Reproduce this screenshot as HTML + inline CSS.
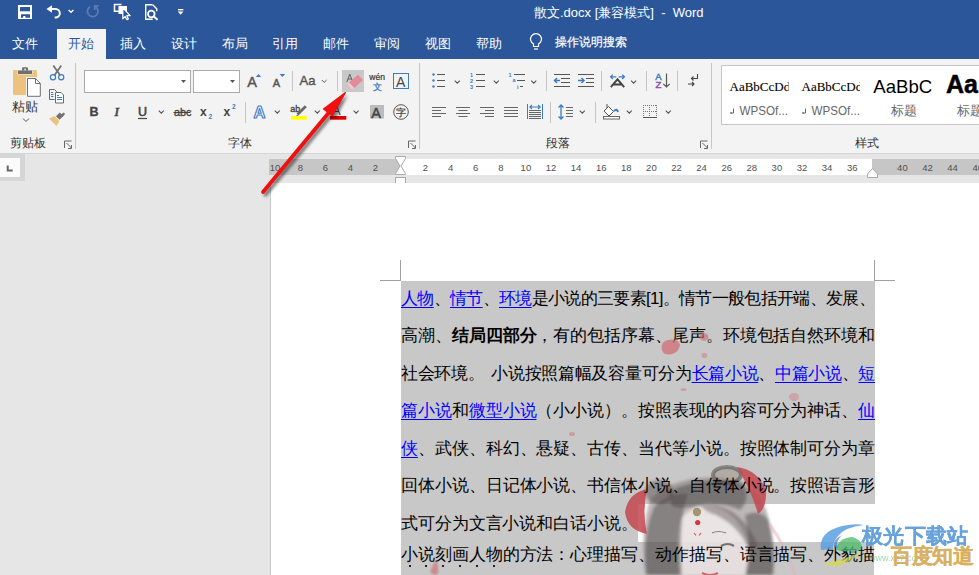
<!DOCTYPE html>
<html><head><meta charset="utf-8">
<style>
*{margin:0;padding:0;box-sizing:border-box}
html,body{width:979px;height:575px;overflow:hidden;background:#e6e6e6;font-family:"Liberation Sans",sans-serif;position:relative}
.a{position:absolute}
#title{left:0;top:0;width:979px;height:59px;background:#2b579a}
.tab{position:absolute;top:34.8px;color:#fff;font-size:12.8px;line-height:17px;white-space:nowrap}
#ribbon{left:0;top:59px;width:979px;height:95px;background:#f3f3f3;border-bottom:1px solid #d6d6d6}
.vsep{position:absolute;width:1px;background:#c8c8c8}
.glabel{position:absolute;top:134.5px;font-size:12px;line-height:16px;color:#333;white-space:nowrap}
.chev{position:absolute;width:5px;height:5px;border-right:1px solid #666;border-bottom:1px solid #666;transform:rotate(45deg)}
.rnum{position:absolute;top:162px;font-size:9.5px;line-height:12px;color:#505050;width:20px;margin-left:-10px;text-align:center}
#page{left:270px;top:183px;width:709px;height:392px;background:#fff;border-left:1px solid #c9c9c9}
b{font-weight:700}
.ln{position:absolute;left:401px;width:474px;height:20px;font-size:17px;line-height:20px;letter-spacing:-0.1px;color:#000;text-align:justify;text-align-last:justify;white-space:normal;font-weight:300}
.lk{color:#0000ff;text-decoration:underline;text-underline-offset:3px;text-decoration-thickness:1px}
</style></head><body>
<div id="title" class="a"></div>
<div class="a" style="left:534px;top:5px;font-size:13px;line-height:16px;color:#fff;white-space:nowrap">散文.docx [兼容模式]&nbsp; - &nbsp;Word</div>

<div class="a" style="left:57px;top:29px;width:49px;height:30px;background:#f3f3f3"></div>
<div class="tab" style="left:12px">文件</div>
<div class="tab" style="left:68px;color:#2b579a">开始</div>
<div class="tab" style="left:120px">插入</div>
<div class="tab" style="left:171px">设计</div>
<div class="tab" style="left:222px">布局</div>
<div class="tab" style="left:272px">引用</div>
<div class="tab" style="left:323px">邮件</div>
<div class="tab" style="left:374px">审阅</div>
<div class="tab" style="left:425px">视图</div>
<div class="tab" style="left:476px">帮助</div>
<div class="tab" style="left:555px;top:33.8px;font-size:12.3px;-webkit-text-stroke:0.2px #fff">操作说明搜索</div>

<div id="ribbon" class="a"></div>
<svg class="a" style="left:0;top:0" width="979" height="153" viewBox="0 0 979 153" font-family="Liberation Sans, sans-serif">
<!-- quick access -->
<rect x="18" y="5" width="14" height="14" fill="#fff"/>
<rect x="20" y="7" width="10" height="4.3" fill="#2b579a"/>
<path d="M21 14.2h9v3.6h-4.6v-1.8h-2.2v1.8h-2.2z" fill="#2b579a"/>
<path d="M46.5 9l5.5-3.8v7.6z" fill="#fff"/>
<path d="M50 9h5.5a4.3 4.3 0 0 1 0 8.6h-0.8" fill="none" stroke="#fff" stroke-width="2"/>
<path d="M68.6 10l2.4 2.2 2.4-2.2" fill="none" stroke="#fff" stroke-width="1.5"/>
<g fill="none" stroke="#5b7bb5" stroke-width="1.8">
  <path d="M95.5 6.8a5.3 5.3 0 1 1 -5.5 0"/>
  <path d="M94.8 10v-4.2h4"/>
</g>
<path d="M121.5 4.6h-7v6.7h4.5" fill="none" stroke="#fff" stroke-width="1.5"/>
<rect x="118.5" y="6" width="8.5" height="8" fill="#fff"/>
<path d="M122.8 7.8v11l2.4-2.4 1.6 3.3 1.6-0.8-1.6-3.2h3.3z" fill="#2b579a" stroke="#fff" stroke-width="1.2" stroke-linejoin="round"/>
<g fill="none" stroke="#fff" stroke-width="1.4">
  <path d="M152.5 4.7h-6.8v14.6h7"/>
  <path d="M152.7 4.7l4 4v2.5"/>
  <circle cx="151.3" cy="14" r="3.3" stroke-width="1.8"/>
  <path d="M153.8 16.5l3.8 3.3" stroke-width="2"/>
</g>
<path d="M178 9.7h5.3" stroke="#fff" stroke-width="1.4"/>
<path d="M177.8 11.4h5.6l-2.8 3.3z" fill="#fff"/>

<!-- lightbulb -->
<g fill="none" stroke="#fff" stroke-width="1.2">
  <path d="M533.5 46.5v-2.5a5.5 5.5 0 1 1 5 0v2.5z"/>
  <path d="M534 49h4"/>
</g>

<!-- ribbon separators -->
<g stroke="#c6c6c6" stroke-width="1">
  <path d="M75.5 63v86"/><path d="M419.5 63v86"/><path d="M711.5 63v86"/>
  <path d="M292.5 71v20"/><path d="M337.5 71v20"/><path d="M245.5 102v21"/>
  <path d="M546.5 71v20"/><path d="M601.5 71v20"/><path d="M646.5 71v20"/><path d="M677.5 71v20"/>
  <path d="M550.5 102v21"/><path d="M595.5 102v21"/>
</g>
<!-- dialog launchers -->
<g fill="none" stroke="#666" stroke-width="1">
  <path d="M64.5 148v-7h7"/><path d="M66.5 143l5 5"/><path d="M68 148.5h3.5v-3.5"/>
  <path d="M408.5 148v-7h7"/><path d="M410.5 143l5 5"/><path d="M412 148.5h3.5v-3.5"/>
  <path d="M700.5 148v-7h7"/><path d="M702.5 143l5 5"/><path d="M704 148.5h3.5v-3.5"/>
</g>

<!-- clipboard -->
<rect x="13" y="70" width="24" height="25" rx="1.2" fill="#ebc27e"/>
<path d="M17.5 69.5h15v5h-15z" fill="#f3f3f3"/>
<path d="M18 70.4h14v3.6h-14z" fill="#707070"/>
<path d="M22 70.5v-2a1.2 1.2 0 0 1 1.2-1.2h3.6a1.2 1.2 0 0 1 1.2 1.2v2z" fill="#707070"/>
<rect x="24.3" y="68.6" width="1.6" height="1.6" fill="#f3f3f3"/>
<path d="M26 77h10l5.8 5.8v15h-15.8z" fill="#f3f3f3"/>
<path d="M27.5 78.5h8l4.8 4.8v13h-12.8z" fill="#fff" stroke="#707070" stroke-width="1"/>
<path d="M35.5 78.5v5h4.8" fill="none" stroke="#707070" stroke-width="1"/>
<path d="M23 118.5l3 3 3-3" fill="none" stroke="#555" stroke-width="1"/>
<!-- scissors -->
<path d="M53.3 65.5l7 10M61.3 65.5l-7 10" stroke="#707070" stroke-width="1.7" fill="none"/>
<circle cx="53" cy="77.3" r="2.6" fill="none" stroke="#3e7cc1" stroke-width="1.2"/>
<circle cx="61.2" cy="77.3" r="2.6" fill="none" stroke="#3e7cc1" stroke-width="1.2"/>
<!-- copy -->
<path d="M49.5 89.5h5l2 2v1" fill="none" stroke="#6a6a6a" stroke-width="1"/>
<path d="M49.5 89.5v10h5" fill="none" stroke="#6a6a6a" stroke-width="1"/>
<path d="M55.5 92.5h5.5l2.5 2.5v8h-8z" fill="#fff" stroke="#6a6a6a" stroke-width="1"/>
<g stroke="#3e7cc1" stroke-width="1"><path d="M51 92.5h2M51 94.5h2.5M51 96.5h2.5M57 95.5h2M57 97.5h5M57 99.5h5"/></g>
<!-- format painter -->
<path d="M63.5 112.5l1.6 1.6-2.8 2.8-1.6-1.6z" fill="#707070"/>
<path d="M55.5 115.8l3.8-3.8 3.5 3.5-3.8 3.8z" fill="#707070" transform="translate(0.5,0.5)"/>
<path d="M49 118.5l5.5-2.5 5 5-3 5z" fill="#ebc27e"/>

<!-- font name/size boxes -->
<rect x="84.5" y="70.5" width="106" height="22" fill="#fff" stroke="#ababab"/>
<rect x="193.5" y="70.5" width="46" height="22" fill="#fff" stroke="#ababab"/>
<path d="M181 80h5l-2.5 3z" fill="#555"/><path d="M230 80h5l-2.5 3z" fill="#555"/>
<!-- grow/shrink -->
<text x="247.3" y="86.8" font-size="14.5" fill="#555" stroke="#555" stroke-width="0.45">A</text>
<path d="M255.8 77h5.4l-2.7-3z" fill="#3e7cc1"/>
<text x="272.7" y="86.8" font-size="11" fill="#555" stroke="#555" stroke-width="0.45">A</text>
<path d="M279.6 74h5.6l-2.8 3z" fill="#3e7cc1"/>
<text x="299.6" y="85.3" font-size="13" fill="#555" stroke="#555" stroke-width="0.4">Aa</text>
<path d="M321.8 80l2.4 2.4 2.4-2.4" fill="none" stroke="#555" stroke-width="1"/>
<!-- eraser -->
<rect x="342" y="70" width="22" height="22" fill="#c8c8c8"/>
<path d="M346.8 82l3-7.8 3 7.8M348 79h3.5" fill="none" stroke="#555" stroke-width="0.9"/>
<g transform="rotate(-42 355 82.3)"><rect x="347.5" y="78.6" width="15" height="7.4" rx="0.8" fill="#e48b9b"/><rect x="347.5" y="78.6" width="3" height="7.4" fill="#f5c9d0"/></g>
<!-- wen -->
<text x="369.3" y="80" font-size="8.5" fill="#333" stroke="#333" stroke-width="0.2">wén</text>
<text x="373" y="89.5" font-size="9" fill="#3e7cc1" stroke="#3e7cc1" stroke-width="0.3">文</text>
<!-- boxed A -->
<rect x="393.5" y="73.5" width="15" height="15" fill="none" stroke="#3e7cc1" stroke-width="1"/>
<text x="396" y="86.5" font-size="14" fill="#444">A</text>

<!-- row 2 font -->
<text x="89.5" y="116" font-size="12.5" font-weight="bold" fill="#444" stroke="#444" stroke-width="0.3">B</text>
<text x="114.5" y="116" font-size="13" font-style="italic" font-family="Liberation Serif, serif" fill="#444" stroke="#444" stroke-width="0.7">I</text>
<text x="138" y="116" font-size="12.5" fill="#444" stroke="#444" stroke-width="0.6">U</text>
<path d="M138 118.5h9" stroke="#444" stroke-width="1.2"/>
<path d="M158.8 110.6l2.5 2.5 2.5-2.5" fill="none" stroke="#555" stroke-width="1.1"/>
<text x="174" y="116" font-size="10.8" fill="#444" stroke="#444" stroke-width="0.35">abc</text>
<path d="M173.5 112.5h17" stroke="#444" stroke-width="1"/>
<text x="200" y="116" font-size="12" font-weight="bold" fill="#444">x</text>
<text x="208.5" y="119" font-size="6.5" fill="#3e7cc1" font-weight="bold">2</text>
<text x="223.5" y="116" font-size="12" font-weight="bold" fill="#444">x</text>
<text x="232" y="108.5" font-size="6.5" fill="#3e7cc1" font-weight="bold">2</text>
<!-- text effects -->
<text x="253.5" y="118" font-size="16.5" font-weight="bold" fill="#fff" stroke="#3e7cc1" stroke-width="1.1" stroke-linejoin="round">A</text>
<path d="M274.8 110.6l2.5 2.5 2.5-2.5" fill="none" stroke="#555" stroke-width="1.1"/>
<!-- highlight -->
<text x="290.3" y="112" font-size="9" fill="#444" stroke="#444" stroke-width="0.35">ab</text>
<path d="M297.5 114.5l8.3-8.3" stroke="#6a6a6a" stroke-width="2.8"/><path d="M296 116l1.5-1.5 1 1z" fill="#555"/>
<rect x="291" y="116" width="15.7" height="3.7" fill="#ffff00"/>
<path d="M314.8 110.6l2.5 2.5 2.5-2.5" fill="none" stroke="#555" stroke-width="1.1"/>
<!-- font color -->
<text x="332" y="115" font-size="13" fill="#444">A</text>
<rect x="330" y="116" width="16.3" height="3.7" fill="#e00000"/>
<path d="M353.6 110.6l2.5 2.5 2.5-2.5" fill="none" stroke="#555" stroke-width="1.1"/>
<!-- shaded A -->
<rect x="370" y="105" width="14" height="13.5" fill="#bcbcbc"/>
<text x="371.3" y="117.5" font-size="14.5" fill="#444" stroke="#444" stroke-width="0.5">A</text>
<!-- circled zi -->
<circle cx="401" cy="112" r="7.3" fill="none" stroke="#555" stroke-width="1"/>
<text x="396" y="116.2" font-size="10" fill="#444" stroke="#444" stroke-width="0.25">字</text>

<!-- paragraph row 1 -->
<g fill="#3e7cc1"><circle cx="433.5" cy="74.5" r="1.2"/><circle cx="433.5" cy="80.5" r="1.2"/><circle cx="433.5" cy="86.5" r="1.2"/></g>
<g stroke="#555" stroke-width="1"><path d="M437 74.5h8M437 80.5h8M437 86.5h8"/></g>
<path d="M454.8 80.6l2.5 2.5 2.5-2.5" fill="none" stroke="#555" stroke-width="1.1"/>
<g font-size="5.5" fill="#3e7cc1" font-weight="bold"><text x="470" y="76.5">1</text><text x="470" y="82.5">2</text><text x="470" y="88.5">3</text></g>
<g stroke="#555" stroke-width="1"><path d="M476 74.5h9M476 80.5h9M476 86.5h9"/></g>
<path d="M493.8 80.6l2.5 2.5 2.5-2.5" fill="none" stroke="#555" stroke-width="1.1"/>
<g font-size="5.5" fill="#3e7cc1" font-weight="bold"><text x="508.5" y="76.5">1</text><text x="512.5" y="82">a</text><text x="517" y="88.5">i</text></g>
<g stroke="#555" stroke-width="1"><path d="M514 74.5h11M517 80.5h8M520 86.5h3"/></g>
<path d="M531.3 80.6l2.5 2.5 2.5-2.5" fill="none" stroke="#555" stroke-width="1.1"/>
<!-- indent -->
<g stroke="#555" stroke-width="1"><path d="M554 74.5h16M561 78.5h9M561 82.5h9M554 86.5h16"/><path d="M578 74.5h16M586 78.5h8M586 82.5h8M578 86.5h16"/></g>
<path d="M554 80.5h6M557 78l-2.5 2.5 2.5 2.5" fill="none" stroke="#3e7cc1" stroke-width="1.5"/>
<path d="M578 80.5h6M581.5 78l2.5 2.5-2.5 2.5" fill="none" stroke="#3e7cc1" stroke-width="1.5"/>
<!-- char spacing -->
<path d="M610.8 87.2L617.5 79.3L624.2 87.2M613.2 84.5h8.6" fill="none" stroke="#444" stroke-width="1.9"/>
<path d="M616.3 76.8h-5.5M612.8 74.6l-2.2 2.2 2.2 2.2M618.7 76.8h5.5M622.2 74.6l2.2 2.2-2.2 2.2" fill="none" stroke="#3e7cc1" stroke-width="1.3"/>
<path d="M631.1 80.6l2.5 2.5 2.5-2.5" fill="none" stroke="#555" stroke-width="1.1"/>
<!-- sort -->
<text x="655.3" y="80.2" font-size="9.5" fill="#3e7cc1" stroke="#3e7cc1" stroke-width="0.45">A</text>
<text x="655.6" y="88" font-size="9.5" fill="#8f50b5" stroke="#8f50b5" stroke-width="0.45">Z</text>
<path d="M666.5 73.5v13.5M663.3 83.8l3.2 3.2 3.2-3.2" fill="none" stroke="#555" stroke-width="1.2"/>
<!-- show marks -->
<path d="M697.5 74v4.5h-6M693.5 76.5l-2 2 2 2" fill="none" stroke="#444" stroke-width="1.1"/>
<path d="M688 84h6M692 82l2 2-2 2" fill="none" stroke="#444" stroke-width="1.1"/>

<!-- paragraph row 2 -->
<g stroke="#666" stroke-width="1">
<path d="M432 107.5h14M432 110.5h9M432 113.5h14M432 116.5h9"/>
<path d="M456 107.5h14M458.5 110.5h9M456 113.5h14M458.5 116.5h9"/>
<path d="M480 107.5h14M485 110.5h9M480 113.5h14M485 116.5h9"/>
<path d="M504 107.5h14M504 110.5h14M504 113.5h14M504 116.5h14"/>
<path d="M529 110.5h12M529 112.5h12M529 114.5h12M529 116.5h12M529 118.5h12"/>
</g>
<path d="M527.5 104v15M542.5 104v15" stroke="#3e7cc1" stroke-width="1"/>
<path d="M529.5 107h11M532 105l-2.2 2 2.2 2M538 105l2.2 2-2.2 2" fill="none" stroke="#3e7cc1" stroke-width="1.1"/>
<!-- line spacing -->
<path d="M561 105v14M558.5 107.5l2.5-2.5 2.5 2.5M558.5 116.5l2.5 2.5 2.5-2.5" fill="none" stroke="#3e7cc1" stroke-width="1.3"/>
<g stroke="#666" stroke-width="1"><path d="M566 107.5h7M566 110.5h7M566 113.5h7M566 116.5h7"/></g>
<path d="M579.8 110.6l2.5 2.5 2.5-2.5" fill="none" stroke="#555" stroke-width="1.1"/>
<!-- shading -->
<path d="M604 111l4.5-4.5 5 5-4.5 4.5z" fill="#fff" stroke="#555" stroke-width="1"/>
<path d="M607 108v-4" stroke="#555" stroke-width="1"/>
<path d="M614 111q3-3 4 1" fill="none" stroke="#3e7cc1" stroke-width="2"/>
<rect x="603.5" y="116.5" width="16" height="2.5" fill="#fff" stroke="#666" stroke-width="1"/>
<path d="M626.8 110.6l2.5 2.5 2.5-2.5" fill="none" stroke="#555" stroke-width="1.1"/>
<!-- borders -->
<g stroke="#777" stroke-width="1" stroke-dasharray="1 1" fill="none"><path d="M643.5 105v12M656.5 105v12M643 105.5h14M643 111.5h14M649.5 105v12"/></g>
<path d="M643 117.5h14" stroke="#555" stroke-width="1"/>
<path d="M665.8 110.6l2.5 2.5 2.5-2.5" fill="none" stroke="#555" stroke-width="1.1"/>

<!-- styles gallery -->
<rect x="721.5" y="65.5" width="270" height="59" fill="#fff" stroke="#c6c6c6"/>
<clipPath id="c1"><rect x="728" y="70" width="60.5" height="30"/></clipPath>
<clipPath id="c2"><rect x="800" y="70" width="60" height="30"/></clipPath>
<text x="729.5" y="91" font-size="13" font-family="Liberation Serif, serif" fill="#000" stroke="#000" stroke-width="0.1" clip-path="url(#c1)">AaBbCcDd</text>
<text x="801.5" y="91" font-size="13" font-family="Liberation Serif, serif" fill="#000" stroke="#000" stroke-width="0.1" clip-path="url(#c2)">AaBbCcDd</text>
<text x="873.3" y="92.6" font-size="18.6" fill="#000">AaBbC</text>
<text x="946" y="93" font-size="25" font-weight="bold" fill="#000" stroke="#000" stroke-width="0.5">Aa</text>
<g fill="#666" font-size="12.2"><text x="739.5" y="115" textLength="48.5" lengthAdjust="spacingAndGlyphs">WPSOf...</text><text x="811.5" y="115" textLength="48.5" lengthAdjust="spacingAndGlyphs">WPSOf...</text></g>
<g fill="none" stroke="#666" stroke-width="1"><path d="M733.5 108.5v4.5h-3M731.5 112l-1 1 1 1"/><path d="M805.5 108.5v4.5h-3M803.5 112l-1 1 1 1"/></g>
<g fill="#666" font-size="12.5"><text x="890.5" y="115">标题</text><text x="957" y="115">标题</text></g>
</svg>

<div class="a" style="left:12px;top:99px;font-size:12.5px;line-height:16px;color:#333">粘贴</div>
<div class="glabel" style="left:10px">剪贴板</div>
<div class="glabel" style="left:228.3px">字体</div>
<div class="glabel" style="left:546px">段落</div>
<div class="glabel" style="left:855px">样式</div>

<!-- ruler -->
<div class="a" style="left:0;top:154px;width:25px;height:27px;background:#d6d6d6"></div>
<div class="a" style="left:0;top:158px;width:20px;height:19px;background:#fbfbfb"></div>
<div class="a" style="left:269px;top:159px;width:710px;height:16px;background:#c6c6c6"></div>
<div class="a" style="left:400px;top:159px;width:472px;height:16px;background:#fff"></div>

<div class="rnum" style="left:275.0px">10</div><div class="rnum" style="left:300.4px">8</div><div class="rnum" style="left:325.3px">6</div><div class="rnum" style="left:350.5px">4</div><div class="rnum" style="left:375.3px">2</div><div class="rnum" style="left:425.5px">2</div><div class="rnum" style="left:450.6px">4</div><div class="rnum" style="left:475.7px">6</div><div class="rnum" style="left:500.8px">8</div><div class="rnum" style="left:525.9px">10</div><div class="rnum" style="left:551.0px">12</div><div class="rnum" style="left:576.1px">14</div><div class="rnum" style="left:601.2px">16</div><div class="rnum" style="left:626.3px">18</div><div class="rnum" style="left:651.4px">20</div><div class="rnum" style="left:676.5px">22</div><div class="rnum" style="left:701.6px">24</div><div class="rnum" style="left:726.7px">26</div><div class="rnum" style="left:751.8px">28</div><div class="rnum" style="left:776.9px">30</div><div class="rnum" style="left:802.0px">32</div><div class="rnum" style="left:827.1px">34</div><div class="rnum" style="left:852.2px">36</div>
<div class="rnum" style="left:902.4px">40</div><div class="rnum" style="left:927.5px">42</div><div class="rnum" style="left:952.6px">44</div><div class="rnum" style="left:977.7px">46</div>
<svg class="a" style="left:0;top:150px" width="979" height="40" viewBox="0 150 979 40">
<path d="M395.5 156.5h10v2l-4.5 7.5 4.5 7.5v1h-10v-1l4.5-7.5-4.5-7.5z" fill="#fff" stroke="#a8a8a8"/>
<rect x="395.5" y="177.5" width="10" height="6" fill="#fff" stroke="#a8a8a8"/>
<path d="M867.5 177.5v-3.5l5-5.5 5 5.5v3.5z" fill="#fff" stroke="#a8a8a8"/>
<path d="M7.7 165.5v5h5" fill="none" stroke="#666" stroke-width="2"/>
</svg>

<div id="page" class="a"></div>
<!-- crop marks -->
<div class="a" style="left:400px;top:260px;width:1px;height:21px;background:#a0a0a0"></div>
<div class="a" style="left:380px;top:280px;width:21px;height:1px;background:#a0a0a0"></div>
<div class="a" style="left:874px;top:260px;width:1px;height:21px;background:#a0a0a0"></div>
<div class="a" style="left:874px;top:280px;width:21px;height:1px;background:#a0a0a0"></div>

<!-- selection -->
<div class="a" style="left:401px;top:281px;width:474px;height:223px;background:#c8c8c8"></div>
<div class="a" style="left:401px;top:504px;width:237px;height:38px;background:#c8c8c8"></div>
<div class="a" style="left:401px;top:542px;width:473px;height:33px;background:#c8c8c8"></div>

<!-- girl illustration (watermark) -->
<svg class="a" style="left:600px;top:440px" width="200" height="135" viewBox="600 440 200 135">
<defs>
<filter id="bl" x="-20%" y="-20%" width="140%" height="140%"><feGaussianBlur stdDeviation="1.5"/></filter>
<filter id="bl2" x="-20%" y="-20%" width="140%" height="140%"><feGaussianBlur stdDeviation="0.6"/></filter>
</defs>
<g filter="url(#bl)">
  <path d="M645 575 Q640 530 650 500 Q665 482 700 478 Q742 474 762 500 Q776 530 774 575z" fill="#7a7070" opacity="0.5"/>
  <path d="M680 575 Q676 540 682 518 Q692 506 708 506 Q738 510 748 545 Q750 562 746 575z" fill="#f8f0f0" opacity="0.8"/>
  <path d="M647 575 Q642 535 654 507 Q668 492 688 494 Q678 520 682 575z" fill="#4a4242" opacity="0.45"/>
  <path d="M700 506 Q738 500 758 545 L750 552 Q738 522 708 512z" fill="#4a4242" opacity="0.4"/>
  <path d="M745 575 Q752 545 745 515 Q760 508 768 520 Q776 550 772 575z" fill="#4a4242" opacity="0.45"/>
  <path d="M668 492 Q700 476 742 482 Q752 498 740 510 Q718 500 697 506 Q680 510 672 506z" fill="#4a4242" opacity="0.45"/>
  <ellipse cx="659" cy="492" rx="14" ry="12" fill="#4a4242" opacity="0.45"/>
</g>
<g filter="url(#bl2)">
  <ellipse cx="727" cy="475" rx="14" ry="8" fill="#8a7f70" fill-opacity="0.4" stroke="#4a4242" stroke-opacity="0.5" stroke-width="4"/>
  <path d="M647 489 Q628 493 625 512 Q627 530 647 534 Q642 512 647 489z" fill="#c4474f" opacity="0.85"/>
  <path d="M737 467 Q758 470 766 490 Q767 508 758 514 Q752 492 737 467z" fill="#c4474f" opacity="0.85"/>
  <circle cx="697" cy="512" r="4.2" fill="#8f7a4a" opacity="0.75"/>
  <circle cx="697.7" cy="522.5" r="2.6" fill="#d9363a"/>
  <path d="M694 533l2 2.5M701 533l-2 2.5" stroke="#e05050" stroke-width="1.2"/>
  <path d="M712 533 q6 -3 14 0" stroke="#555" stroke-width="1.2" fill="none" opacity="0.7"/>
  <path d="M721 546 q7 -4 13 0" stroke="#555" stroke-width="2.2" fill="none" opacity="0.8"/>
  <path d="M702 573 q8 4 16 0" stroke="#c86868" stroke-width="2" fill="none"/>
  <path d="M770 525 Q785 545 795 575" stroke="#e8b0b0" stroke-width="3" fill="none" opacity="0.5"/>
</g>
</svg>
<div class="ln" style="top:289px;letter-spacing:-0.7px"><span class="lk">人物</span>、<span class="lk">情节</span>、<span class="lk">环境</span>是小说的三要素[1]。情节一般包括开端、发展、</div>
<div class="ln" style="top:326px">高潮、<b>结局四部分</b>，有的包括序幕、尾声。环境包括自然环境和</div>
<div class="ln" style="top:364px;letter-spacing:-0.35px">社会环境。<span style="display:inline-block;width:7px"></span>小说按照篇幅及容量可分为<span class="lk">长篇小说</span>、<span class="lk">中篇小说</span>、<span class="lk">短</span></div>
<div class="ln" style="top:401px"><span class="lk">篇小说</span>和<span class="lk">微型小说</span>（小小说）。按照表现的内容可分为神话、<span class="lk">仙</span></div>
<div class="ln" style="top:439px"><span class="lk">侠</span>、武侠、科幻、悬疑、古传、当代等小说。按照体制可分为章</div>
<div class="ln" style="top:476px">回体小说、日记体小说、书信体小说、自传体小说。按照语言形</div>
<div class="ln" style="top:514px;text-align-last:left;letter-spacing:-0.1px">式可分为文言小说和白话小说。</div>
<div class="a" style="left:408.5px;top:565px;width:2px;height:2px;background:#222"></div><div class="a" style="left:425.4px;top:565px;width:2px;height:2px;background:#222"></div><div class="a" style="left:442.3px;top:565px;width:2px;height:2px;background:#222"></div><div class="a" style="left:459.2px;top:565px;width:2px;height:2px;background:#222"></div><div class="a" style="left:476.1px;top:565px;width:2px;height:2px;background:#222"></div><div class="a" style="left:493.0px;top:565px;width:2px;height:2px;background:#222"></div>
<div class="ln" style="top:545px">小说刻画人物的方法：心理描写、动作描写、语言描写、外貌描</div>




<!-- petals -->
<svg class="a" style="left:540px;top:320px" width="280" height="130" viewBox="540 320 280 130">
<defs><filter id="pb"><feGaussianBlur stdDeviation="0.7"/></filter></defs>
<g fill="#cf6f75" filter="url(#pb)">
<path d="M662 350 Q660 342 668 340 Q678 338 680 345 Q679 352 672 354 Q664 356 662 350z" opacity="0.75"/>
<ellipse cx="704" cy="337" rx="4.5" ry="3.8" opacity="0.65"/>
<ellipse cx="704.5" cy="355.5" rx="2.8" ry="2.8" opacity="0.45"/>
<ellipse cx="683.5" cy="389.5" rx="3" ry="1.5" opacity="0.45"/>
<ellipse cx="794" cy="397" rx="5" ry="4" opacity="0.4"/>
<ellipse cx="572" cy="434" rx="3" ry="2" opacity="0.5"/>
</g>
</svg>

<!-- watermark logo -->
<svg class="a" style="left:790px;top:515px" width="189" height="60" viewBox="790 515 189 60">
<defs><filter id="bl3"><feGaussianBlur stdDeviation="0.7"/></filter></defs>
<g filter="url(#bl3)">
<path d="M821 550 Q818 532 842 526 Q855 523 864 525 Q845 527 838 536 Q832 543 833 549z" fill="#5aa0e0" opacity="0.85"/>
<path d="M834 548 Q832 540 842 535 Q835 542 838 548z" fill="#2f6fc0" opacity="0.6"/>
<path d="M836 550 Q838 538 852 537 Q864 540 861 550 Q850 553 836 550z" fill="#4cb86a" opacity="0.75"/>
<path d="M824 563 Q840 561 861 552 Q852 562 838 566 Q828 567 824 563z" fill="#d6d84a" opacity="0.7"/>
</g>
<text x="869" y="561" font-size="9" fill="#66c080" opacity="0.6">www.xz7.com</text>
</svg>

<!-- red arrow -->
<svg class="a" style="left:240px;top:80px" width="120" height="130" viewBox="240 80 120 130">
<defs><filter id="sh" x="-30%" y="-30%" width="160%" height="160%"><feGaussianBlur stdDeviation="1.8"/></filter></defs>
<g transform="translate(2.5,2.5)" filter="url(#sh)" opacity="0.5">
<path d="M263 192 L330 111" stroke="#000" stroke-width="4" stroke-linecap="round"/>
<path d="M345.5 92.5 L323.5 109 L333 116z" fill="#000"/>
</g>
<path d="M263 192 L331 110" stroke="#f01010" stroke-width="3.8" stroke-linecap="round"/>
<path d="M345.5 92.5 L323.5 109 L332.5 115.5z" fill="#f01010" stroke="#f01010" stroke-width="1.2" stroke-linejoin="round"/>
</svg>
<div class="a" style="left:862px;top:523px;font-size:20.5px;line-height:26px;font-weight:700;color:#5b9bd8;-webkit-text-stroke:0.2px #5b9bd8;opacity:0.92;letter-spacing:0.3px;white-space:nowrap">极光下载站</div>
<div class="a" style="left:891px;top:543px;font-size:20.5px;line-height:26px;font-weight:700;color:#d9b062;-webkit-text-stroke:0.25px #d9b062;letter-spacing:-0.3px;white-space:nowrap">百度知道</div>
<svg class="a" style="left:420px;top:555px" width="30" height="20" viewBox="420 555 30 20"><defs><filter id="pb2"><feGaussianBlur stdDeviation="0.8"/></filter></defs><path d="M436 560 Q432 566 430 572 Q434 576 438 574 Q439 566 436 560z" fill="#cf7075" opacity="0.7" filter="url(#pb2)"/></svg>
</body></html>
